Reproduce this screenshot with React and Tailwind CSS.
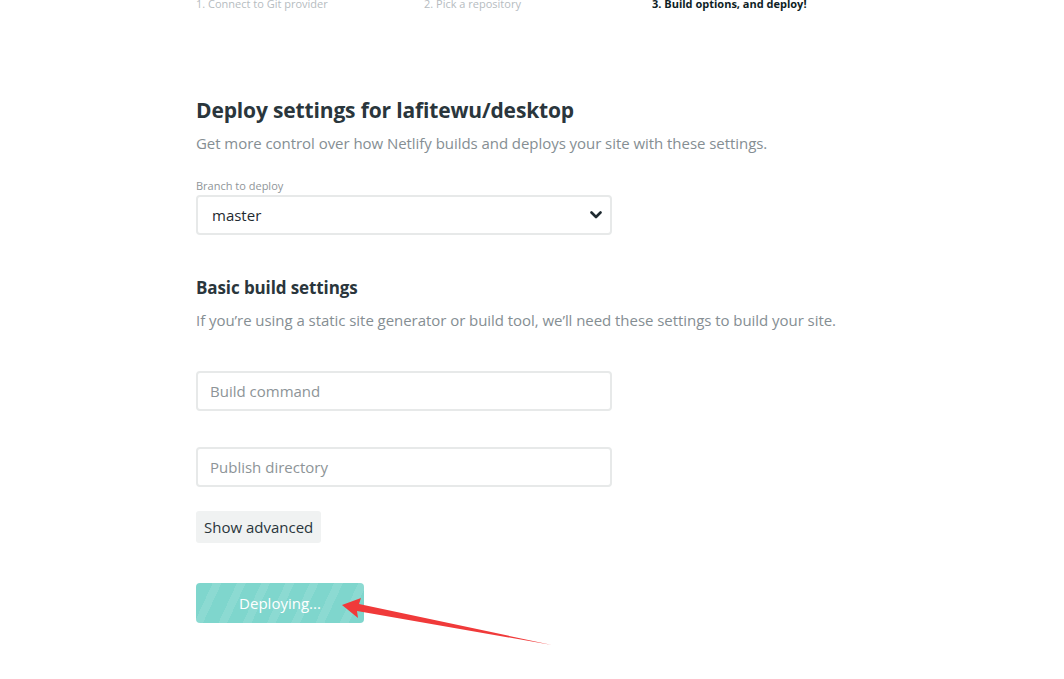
export default function App() {
  const font = { fontFamily: '"Open Sans", "Noto Sans", sans-serif' };
  return (
    <div className="relative w-[1064px] h-[679px] bg-white overflow-hidden" style={font}>
      <div className="ml-[196px] w-[700px] flex flex-col">
        <div className="grid grid-cols-[228px_228px_228px] -mt-[4px] text-[11px] leading-[16px]">
          <span className="text-[#b6bcbf]">1. Connect to Git provider</span>
          <span className="text-[#b6bcbf]">2. Pick a repository</span>
          <span className="text-[#0e1e25] font-bold">3. Build options, and deploy!</span>
        </div>

        <h1 className="mt-[83px] text-[21px] leading-[30px] font-bold text-[#2a363c] tracking-[-0.15px]">
          Deploy settings for lafitewu/desktop
        </h1>
        <p className="mt-[7px] text-[15px] leading-[22px] text-[#858e93] tracking-[-0.05px]">
          Get more control over how Netlify builds and deploys your site with these settings.
        </p>

        <label className="mt-[25px] text-[11px] leading-[14px] text-[#8f9599]">Branch to deploy</label>
        <div className="mt-[2px] w-[416px] h-[40px] border-2 border-[#e7e9e9] rounded-[4px] flex items-center justify-between pl-[14px] pr-[8px]">
          <span className="text-[15px] text-[#1f2a30]">master</span>
          <svg width="12" height="8" viewBox="0 0 12 8">
            <path d="M1.5 1.5 L6 6 L10.5 1.5" fill="none" stroke="#1f2a30" strokeWidth="2.6" strokeLinecap="round" strokeLinejoin="round" />
          </svg>
        </div>

        <h2 className="mt-[40px] text-[17px] leading-[26px] font-bold text-[#2a363c] tracking-[-0.1px]">
          Basic build settings
        </h2>
        <p className="mt-[8px] text-[15px] leading-[22px] text-[#858e93] tracking-[-0.05px]">
          If you’re using a static site generator or build tool, we’ll need these settings to build your site.
        </p>

        <div className="mt-[40px] w-[416px] h-[40px] border-2 border-[#e7e9e9] rounded-[4px] flex items-center pl-[12px]">
          <span className="text-[15px] text-[#8d9497]">Build command</span>
        </div>
        <div className="mt-[36px] w-[416px] h-[40px] border-2 border-[#e7e9e9] rounded-[4px] flex items-center pl-[12px]">
          <span className="text-[15px] text-[#8d9497]">Publish directory</span>
        </div>

        <div className="mt-[24px]">
          <button className="h-[32px] px-[8px] bg-[#f0f2f2] rounded-[3px] text-[15px] text-[#2a363c]">
            Show advanced
          </button>
        </div>

        <div className="mt-[40px]">
          <button className="w-[168px] h-[40px] rounded-[4px] text-[15px] text-white bg-[repeating-linear-gradient(-65deg,#7fd6cd_0px,#7fd6cd_14px,#8cdad2_14px,#8cdad2_22px)]">
            Deploying...
          </button>
        </div>
      </div>

      <svg className="absolute left-0 top-0" width="1064" height="679" viewBox="0 0 1064 679">
        <polygon points="342,605 361,598 359,604 552,645 357,611 358,618" fill="#f03a3a" />
      </svg>
    </div>
  );
}
